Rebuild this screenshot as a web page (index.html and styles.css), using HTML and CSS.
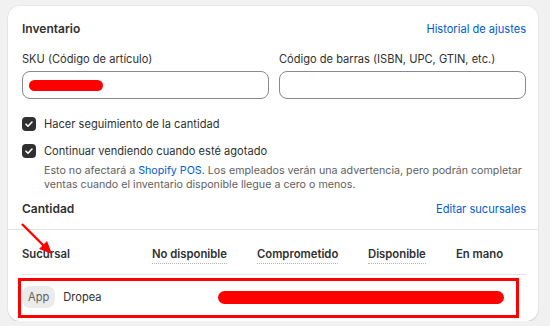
FILE: index.html
```html
<!DOCTYPE html>
<html lang="es">
<head>
<meta charset="utf-8">
<link rel="stylesheet" href="styles.css">
</head>
<body>
<div class="card">
  <div class="section top">
    <div class="head">
      <span class="title">Inventario</span>
      <a class="link">Historial de ajustes</a>
    </div>
    <div class="fields">
      <div class="field">
        <label>SKU (Código de artículo)</label>
        <div class="input"><span class="redact-sku"></span></div>
      </div>
      <div class="field">
        <label>Código de barras (ISBN, UPC, GTIN, etc.)</label>
        <div class="input"></div>
      </div>
    </div>
    <div class="check first">
      <span class="box"><svg viewBox="0 0 14 14" width="14" height="14"><path d="M4 7.2l2 2 4-4.2" fill="none" stroke="#fff" stroke-width="1.6" stroke-linecap="round" stroke-linejoin="round"/></svg></span>
      <span>Hacer seguimiento de la cantidad</span>
    </div>
    <div class="check second">
      <span class="box"><svg viewBox="0 0 14 14" width="14" height="14"><path d="M4 7.2l2 2 4-4.2" fill="none" stroke="#fff" stroke-width="1.6" stroke-linecap="round" stroke-linejoin="round"/></svg></span>
      <span>Continuar vendiendo cuando esté agotado</span>
    </div>
    <p class="help">Esto no afectará a <a class="link">Shopify POS</a>. Los empleados verán una advertencia, pero podrán completar ventas cuando el inventario disponible llegue a cero o menos.</p>
    <div class="head qty">
      <span class="title">Cantidad</span>
      <a class="link">Editar sucursales</a>
    </div>
  </div>
  <div class="section table">
    <div class="thead">
      <span class="th">Sucursal</span>
      <span class="th"><span class="dot">No disponible</span></span>
      <span class="th"><span class="dot">Comprometido</span></span>
      <span class="th"><span class="dot">Disponible</span></span>
      <span class="th">En mano</span>
    </div>
    <div class="trow">
      <span class="loc"><span class="badge">App</span><span>Dropea</span></span>
      <span class="redact-row"></span>
    </div>
    <div class="mark-box"></div>
    <svg class="arrow" width="40" height="40" viewBox="0 0 40 40">
      <line x1="6" y1="6" x2="31" y2="31" stroke="#f00" stroke-width="2.4"/>
      <path d="M36 36 L23 31 L31 23 Z" fill="#f00"/>
    </svg>
  </div>
</div>
</body>
</html>
```
FILE: styles.css
```css
* { box-sizing: border-box; }
body {
  margin: 0;
  background: #f1f1f1;
  font-family: Inter, "Noto Sans", sans-serif;
  font-size: 11.1px;
  color: #303030;
}
.card {
  margin: 6px 0 0 8px;
  width: 530px;
  height: 315px;
  background: #fff;
  border-radius: 12px;
  box-shadow: 0 1px 1px rgba(0,0,0,0.12), 0 0 0 1px rgba(0,0,0,0.03);
  position: relative;
}
.section.top {
  padding: 15px 12px 12px 14px;
  border-bottom: 1px solid #e3e3e3;
}
.head {
  display: flex;
  justify-content: space-between;
  line-height: 16px;
}
.title { font-weight: 600; font-size: 12px; }
.link { color: #005bd3; text-decoration: none; }
.fields {
  display: grid;
  grid-template-columns: 1fr 1fr;
  gap: 10px;
  margin-top: 14px;
}
.field label { display: block; line-height: 16px; }
.input {
  margin-top: 4px;
  height: 28px;
  border: 1px solid #8a8a8a;
  border-radius: 8px;
  display: flex;
  align-items: center;
  padding-left: 6px;
}
.redact-sku {
  width: 74px;
  height: 11px;
  background: #f00;
  border-radius: 6px;
}
.check {
  display: flex;
  align-items: center;
  gap: 8px;
  line-height: 16px;
}
.check.first { margin-top: 17px; }
.check.second { margin-top: 11px; }
.box {
  width: 14px;
  height: 14px;
  border-radius: 4px;
  background: #303030;
  display: flex;
}
.help {
  margin: 5px 0 0 22px;
  font-size: 10.7px;
  line-height: 14px;
  color: #616161;
}
.head.qty { margin-top: 9px; }
.section.table {
  padding: 0 12px 0 14px;
}
.thead {
  display: grid;
  grid-template-columns: 130px 105px 111px 88px 1fr;
  align-items: center;
  height: 45px;
  padding-top: 4px;
  border-bottom: 1px solid #e3e3e3;
  font-weight: 600;
  font-size: 11.3px;
  line-height: 16px;
}
.dot {
  border-bottom: 1px dotted #b5b5b5;
  padding-bottom: 2px;
}
.trow {
  display: flex;
  align-items: center;
  height: 44px;
}
.loc {
  display: flex;
  align-items: center;
  gap: 8px;
  width: 196px;
}
.badge {
  background: #ebebeb;
  color: #616161;
  border-radius: 8px;
  padding: 3px 6px;
  line-height: 16px;
}
.redact-row {
  width: 286px;
  height: 13px;
  background: #f00;
  border-radius: 7px;
}
.mark-box {
  position: absolute;
  left: 10px;
  top: 272px;
  width: 501px;
  height: 40px;
  border: 3px solid #f00;
}
.arrow {
  position: absolute;
  left: 8px;
  top: 212px;
}
```
